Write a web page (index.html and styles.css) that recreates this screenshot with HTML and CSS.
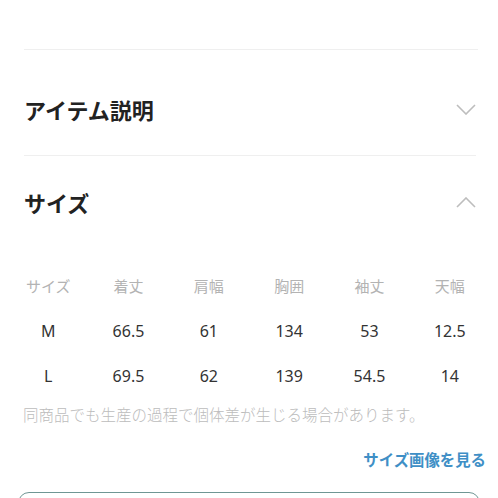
FILE: index.html
```html
<!DOCTYPE html>
<html lang="ja">
<head>
    <meta charset="UTF-8">
    <meta name="viewport" content="width=device-width, initial-scale=1.0">
    <title>アイテム詳細</title>
    <link rel="stylesheet" href="styles.css">
</head>
<body>
    <div class="detail-page">
        <div class="top-space"></div>

        <div class="accordion">
            <div class="accordion-header first">
                <h2 class="accordion-title">アイテム説明</h2>
                <svg class="chevron" width="20" height="11" viewBox="0 0 20 11">
                    <path d="M1 1 L10 10 L19 1" fill="none" stroke="#bdbdbd" stroke-width="1.6"/>
                </svg>
            </div>
        </div>

        <div class="accordion open">
            <div class="accordion-header">
                <h2 class="accordion-title">サイズ</h2>
                <svg class="chevron" width="20" height="11" viewBox="0 0 20 11">
                    <path d="M1 10 L10 1 L19 10" fill="none" stroke="#bdbdbd" stroke-width="1.6"/>
                </svg>
            </div>

            <div class="size-table">
                <div class="size-row head">
                    <span>サイズ</span><span>着丈</span><span>肩幅</span><span>胸囲</span><span>袖丈</span><span>天幅</span>
                </div>
                <div class="size-row">
                    <span>M</span><span>66.5</span><span>61</span><span>134</span><span>53</span><span>12.5</span>
                </div>
                <div class="size-row">
                    <span>L</span><span>69.5</span><span>62</span><span>139</span><span>54.5</span><span>14</span>
                </div>
            </div>

            <p class="size-note">同商品でも生産の過程で個体差が生じる場合があります。</p>

            <div class="size-link-row">
                <a href="#" class="size-link">サイズ画像を見る</a>
            </div>
        </div>

        <div class="outline-button"></div>
    </div>
</body>
</html>
```

FILE: styles.css
```css
body {
    margin: 0;
    padding: 0;
    background: #fff;
    font-family: "Noto Sans", "Noto Sans CJK JP", sans-serif;
    color: #333;
    overflow: hidden;
}

.detail-page {
    width: 498px;
    height: 498px;
    padding: 0 8px;
    box-sizing: border-box;
    overflow: hidden;
}

.top-space {
    height: 49px;
    margin: 0 12px 0 16px;
    border-bottom: 1px solid #efefef;
}

.accordion {
    margin: 0 14px 0 16px;
}

.accordion-header {
    display: flex;
    justify-content: space-between;
    align-items: center;
    height: 30px;
    padding: 44px 0 31px;
    border-bottom: 1px solid #efefef;
}

.accordion.open .accordion-header {
    padding: 31px 0 0;
    border-bottom: none;
}

.accordion-title {
    margin: 0;
    font-family: "Noto Sans CJK JP", sans-serif;
    font-size: 22px;
    font-weight: 700;
    line-height: 30px;
    color: #222;
}

.chevron {
    display: block;
}

.size-table {
    margin: 46px -14px 0 -16px;
}

.size-row {
    display: grid;
    grid-template-columns: repeat(6, 1fr);
    height: 45px;
    align-items: center;
    text-align: center;
    font-size: 16px;
    color: #333;
}

.size-row.head {
    font-family: "Noto Sans CJK JP", sans-serif;
    font-size: 15px;
    color: #b3b3b3;
}

.size-note {
    margin: 5px 0 0 -1px;
    font-family: "Noto Sans CJK JP", sans-serif;
    font-size: 15.5px;
    font-weight: 300;
    line-height: 22px;
    color: #bcbcbc;
    white-space: nowrap;
}

.size-link-row {
    display: flex;
    justify-content: flex-end;
    margin: 23px -10px 0 0;
}

.size-link {
    font-family: "Noto Sans CJK JP", sans-serif;
    font-size: 15.4px;
    font-weight: 700;
    line-height: 22px;
    color: #3f8fc6;
    text-decoration: none;
}

.outline-button {
    margin: 22px 10px 0 10px;
    height: 40px;
    border: 1.5px solid #6f9694;
    border-radius: 11px;
}
```
